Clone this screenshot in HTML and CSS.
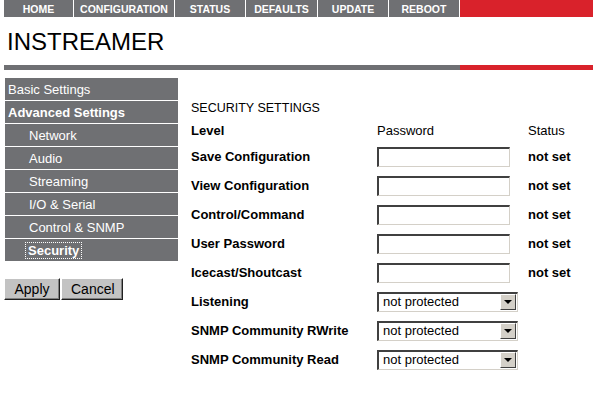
FILE: index.html
```html
<!DOCTYPE html>
<html lang="en">
<head>
    <meta charset="UTF-8">
    <meta name="viewport" content="width=device-width, initial-scale=1.0">
    <title>Instreamer - Security</title>
    <link rel="stylesheet" href="styles.css">
</head>
<body>
    <div class="topnav">
        <a class="nav-item w-home" href="#">HOME</a>
        <a class="nav-item w-config" href="#">CONFIGURATION</a>
        <a class="nav-item w-status" href="#">STATUS</a>
        <a class="nav-item w-defaults" href="#">DEFAULTS</a>
        <a class="nav-item w-update" href="#">UPDATE</a>
        <a class="nav-item w-reboot" href="#">REBOOT</a>
        <span class="nav-fill"></span>
    </div>

    <h1 class="brand">INSTREAMER</h1>

    <div class="rule">
        <span class="rule-gray"></span>
        <span class="rule-red"></span>
    </div>

    <div class="layout">
        <div class="side">
            <ul class="menu">
                <li class="menu-item">Basic Settings</li>
                <li class="menu-item bold">Advanced Settings</li>
                <li class="menu-item sub">Network</li>
                <li class="menu-item sub">Audio</li>
                <li class="menu-item sub">Streaming</li>
                <li class="menu-item sub">I/O &amp; Serial</li>
                <li class="menu-item sub">Control &amp; SNMP</li>
                <li class="menu-item sub bold"><span class="focus">Security</span></li>
            </ul>
            <div class="actions">
                <button class="btn btn-apply">Apply</button>
                <button class="btn btn-cancel">Cancel</button>
            </div>
        </div>

        <div class="content">
            <h2 class="section-title">SECURITY SETTINGS</h2>
            <div class="form">
                <div class="head bold">Level</div>
                <div class="head">Password</div>
                <div class="head">Status</div>

                <div class="label">Save Configuration</div>
                <div><input class="pw" type="password"></div>
                <div class="state">not set</div>

                <div class="label">View Configuration</div>
                <div><input class="pw" type="password"></div>
                <div class="state">not set</div>

                <div class="label">Control/Command</div>
                <div><input class="pw" type="password"></div>
                <div class="state">not set</div>

                <div class="label">User Password</div>
                <div><input class="pw" type="password"></div>
                <div class="state">not set</div>

                <div class="label">Icecast/Shoutcast</div>
                <div><input class="pw" type="password"></div>
                <div class="state">not set</div>

                <div class="label">Listening</div>
                <div class="select"><span class="select-text">not protected</span><span class="select-arrow"></span></div>
                <div></div>

                <div class="label">SNMP Community RWrite</div>
                <div class="select"><span class="select-text">not protected</span><span class="select-arrow"></span></div>
                <div></div>

                <div class="label">SNMP Community Read</div>
                <div class="select"><span class="select-text">not protected</span><span class="select-arrow"></span></div>
                <div></div>
            </div>
        </div>
    </div>
</body>
</html>
```

FILE: styles.css
```css
body {
    margin: 0;
    font-family: "Liberation Sans", Arial, sans-serif;
    font-size: 13px;
    color: #000;
    background-color: #fff;
}

/* top navigation */
.topnav {
    display: flex;
    height: 17px;
    margin-left: 4px;
}
.nav-item {
    display: flex;
    align-items: center;
    justify-content: center;
    background-color: #6f7073;
    border-right: 1px solid #fff;
    color: #fff;
    font-size: 10.5px;
    font-weight: bold;
    text-decoration: none;
    box-sizing: border-box;
}
.w-home { width: 70px; }
.w-config { width: 101px; }
.w-status { width: 71px; }
.w-defaults { width: 72px; }
.w-update { width: 71px; }
.w-reboot { width: 71px; }
.nav-fill {
    flex: 1;
    background-color: #d9222b;
}

.brand {
    margin: 11px 0 0 7px;
    font-size: 24px;
    font-weight: normal;
    line-height: 28px;
}

.rule {
    display: flex;
    height: 5px;
    margin: 9px 0 0 4px;
}
.rule-gray {
    width: 456px;
    background-color: #6f7073;
}
.rule-red {
    flex: 1;
    background-color: #d9222b;
}

/* page body */
.layout {
    display: flex;
    padding: 8px 0 0 4px;
}
.side {
    width: 174px;
}
.menu {
    list-style: none;
    margin: 0 0 0 1px;
    padding: 0;
}
.menu-item {
    height: 22px;
    line-height: 23px;
    padding-left: 3px;
    background-color: #6f7073;
    color: #fff;
    border-top: 1px solid #fff;
}
.menu-item:first-child {
    border-top: none;
}
.menu-item.sub {
    padding-left: 24px;
}
.bold {
    font-weight: bold;
}
.focus {
    outline: 1px dotted #fff;
    outline-offset: 0;
    padding: 0 2px 0 2px;
    margin-left: -3px;
}

.actions {
    display: flex;
    gap: 1px;
    margin-top: 17px;
}
.btn {
    height: 22px;
    padding: 0 9px;
    font-family: "Liberation Sans", Arial, sans-serif;
    font-size: 14px;
    color: #000;
    background-color: #c3c3c3;
    border-style: solid;
    border-width: 1px;
    border-color: #fff #202020 #202020 #fff;
    box-shadow: inset -1px -1px 0 #808080;
}
.btn-apply { width: 56px; }
.btn-cancel { width: 62px; }

.content {
    margin-left: 13px;
    padding-top: 22px;
}
.section-title {
    margin: 0 0 2px 0;
    font-size: 12.5px;
    font-weight: normal;
    line-height: 16px;
}

.form {
    display: grid;
    grid-template-columns: 186px 151px auto;
    grid-template-rows: 24px;
    grid-auto-rows: 29px;
    align-items: center;
}
.head {
    font-size: 13px;
}
.label {
    font-weight: bold;
}
.state {
    font-weight: bold;
}

.pw {
    display: block;
    width: 133px;
    height: 20px;
    margin: 0;
    padding: 0 3px;
    box-sizing: border-box;
    border-style: solid;
    border-width: 2px 1px 1px 2px;
    border-color: #404040 #d4d0c8 #d4d0c8 #404040;
    background-color: #fff;
}

.select {
    display: flex;
    align-items: stretch;
    width: 141px;
    height: 20px;
    box-sizing: border-box;
    border-style: solid;
    border-width: 2px 1px 1px 2px;
    border-color: #404040 #d4d0c8 #d4d0c8 #404040;
    background-color: #fff;
}
.select-text {
    flex: 1;
    padding-left: 4px;
    line-height: 16px;
    font-size: 13px;
}
.select-arrow {
    display: flex;
    align-items: center;
    justify-content: center;
    width: 16px;
    margin: 0 1px 1px 0;
    box-sizing: border-box;
    background-color: #d4d0c8;
    border-style: solid;
    border-width: 1px;
    border-color: #fff #404040 #404040 #fff;
}
.select-arrow::after {
    content: "";
    border-left: 4px solid transparent;
    border-right: 4px solid transparent;
    border-top: 4px solid #000;
    margin-top: 1px;
}
```
